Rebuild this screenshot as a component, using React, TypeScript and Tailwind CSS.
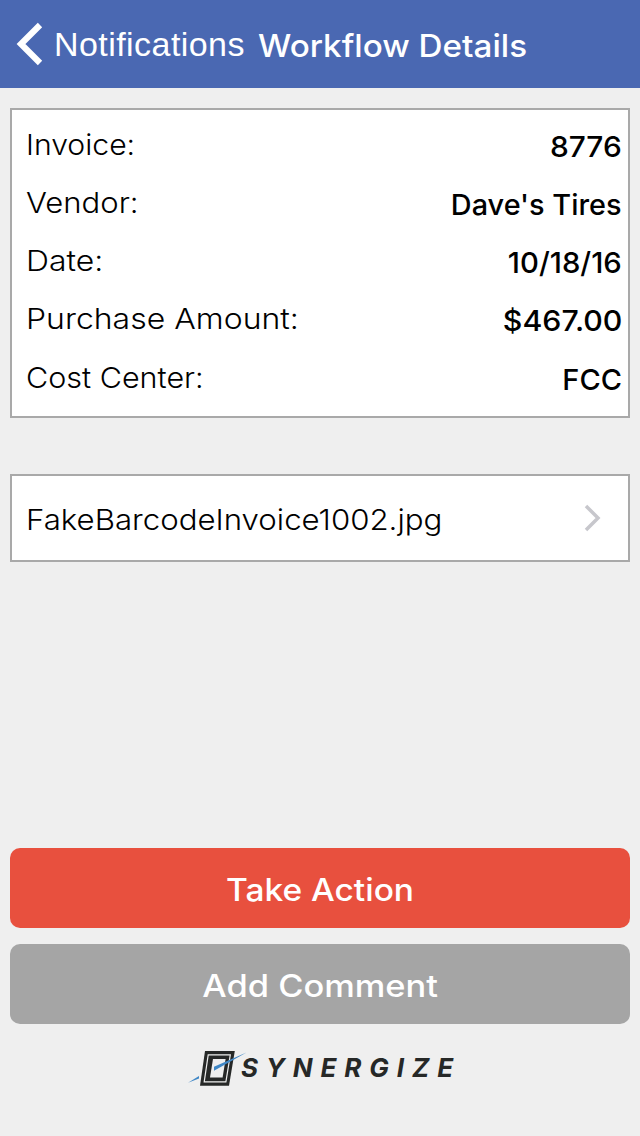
const rows = [
  { label: 'Invoice:', value: '8776', labelClass: 'scale-x-[1.04]', valueClass: 'scale-x-[1.03]' },
  { label: 'Vendor:', value: "Dave's Tires", labelClass: 'scale-x-[1.07]', valueClass: 'scale-x-[0.995]' },
  { label: 'Date:', value: '10/18/16', labelClass: 'scale-x-[1.1]', valueClass: 'scale-x-[1.01]' },
  { label: 'Purchase Amount:', value: '$467.00', labelClass: 'scale-x-[1.103]', valueClass: 'scale-x-[1.045]' },
  { label: 'Cost Center:', value: 'FCC', labelClass: 'scale-x-[1.052]', valueClass: 'scale-x-[1]' },
];

function Header() {
  return (
    <header className="flex h-[88px] shrink-0 items-center bg-[#4a68b2] text-white">
      <button className="flex items-center pl-[16px]">
        <svg width="27" height="44" viewBox="0 0 27 44" fill="none" stroke="currentColor" strokeWidth="6.2">
          <path d="M24 3 L5 22 L24 41" />
        </svg>
        <span className="ml-[11px] w-[191px] font-['Liberation_Sans',sans-serif] text-left text-[34px] leading-[40px] tracking-[0.44px]">
          Notifications
        </span>
      </button>
      <h1 className="ml-[12.5px] origin-left scale-x-[1.055] pt-[3px] text-[31.5px] leading-[40px] font-medium whitespace-nowrap">
        Workflow Details
      </h1>
    </header>
  );
}

function Logo() {
  return (
    <div className="mt-[24px] flex h-[40px] items-center pl-[186px] text-[#262827]">
      <svg width="62" height="40" viewBox="0 0 62 40">
        <path d="M19 3 H48.8 L43 37.7 H14 Z" fill="#262827" />
        <path d="M22.2 6.8 H44.3 L39.9 33.8 H18.2 Z" fill="none" stroke="#efefef" strokeWidth="1.2" />
        <path d="M27 11 H39.6 L36.6 29.5 H24 Z" fill="#efefef" />
        <path d="M28 18.7 L60.5 4.6 L28 22.7 Z" fill="#3f87c6" />
        <path d="M2 34.7 L13 28 V30.5 Z" fill="#3f87c6" />
      </svg>
      <span className="ml-[-7px] text-[26px] leading-[40px] font-bold italic tracking-[7.9px]">SYNERGIZE</span>
    </div>
  );
}

export default function App() {
  return (
    <div className="flex h-[1136px] w-[640px] flex-col overflow-hidden bg-[#efefef] font-['Inter',sans-serif] text-black">
      <Header />
      <main className="flex flex-col px-[10px]">
        <section className="mt-[20px] h-[310px] border-2 border-[#a9a9a9] bg-white pt-[5.5px] pr-[6px] pl-[13.5px] text-[29px]">
          {rows.map((row) => (
            <div key={row.label} className="flex h-[58.2px] items-center justify-between">
              <span className={`origin-left font-[350] ${row.labelClass}`}>{row.label}</span>
              <span className={`origin-right pt-[4px] font-medium ${row.valueClass}`}>{row.value}</span>
            </div>
          ))}
        </section>
        <button className="mt-[56px] flex h-[88px] items-center justify-between border-2 border-[#a9a9a9] bg-white pr-[27.5px] pl-[13.5px] text-[29px]">
          <span className="origin-left scale-x-[1.076] pt-[3px] font-[350]">FakeBarcodeInvoice1002.jpg</span>
          <svg width="17" height="28" viewBox="0 0 17 28" fill="none" stroke="#c7c7cc" strokeWidth="3.5">
            <path d="M2 2 L14 14 L2 26" />
          </svg>
        </button>
        <button className="mt-[286px] flex h-[80px] items-center justify-center rounded-[10px] bg-[#e8503e] pt-[4px] text-[31px] font-medium text-white">
          <span className="scale-x-[1.08]">Take Action</span>
        </button>
        <button className="mt-[16px] flex h-[80px] items-center justify-center rounded-[10px] bg-[#a5a5a5] pt-[4px] text-[31px] font-medium text-white">
          <span className="scale-x-[1.11]">Add Comment</span>
        </button>
      </main>
      <Logo />
    </div>
  );
}
